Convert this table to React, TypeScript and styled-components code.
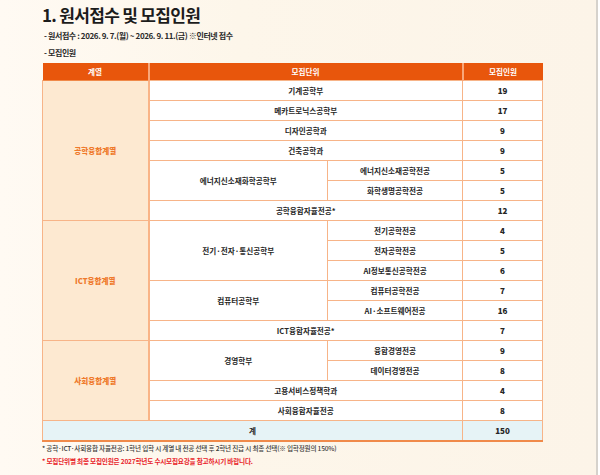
import React from "react";
import styled, { createGlobalStyle } from "styled-components";

const Global = createGlobalStyle`
  html, body { margin: 0; padding: 0; }
  body { font-family: "Noto Sans CJK KR", "Noto Sans", sans-serif; }
`;

const Page = styled.div`
  width: 598px;
  height: 475px;
  box-sizing: border-box;
  padding: 5px 0 0 42px;
  border-right: 2px solid #d6d2cc;
  background: linear-gradient(to right, #fffaf3 0%, #fdf6ea 40%, #fcf4e8 100%);
  color: #222;
  overflow: hidden;
`;

const Title = styled.h1`
  margin: 0;
  font-size: 17px;
  line-height: 20px;
  font-weight: 700;
  letter-spacing: -0.7px;
  color: #1c1c1c;
`;

const Sub = styled.div<{ $top: number }>`
  margin-top: ${(p) => p.$top}px;
  padding-left: 2px;
  font-size: 8px;
  line-height: 14px;
  font-weight: 700;
  letter-spacing: -0.4px;
  color: #2a2a2a;
`;

const Table = styled.table`
  margin-top: 3px;
  width: 500px;
  border-collapse: collapse;
  table-layout: fixed;
  font-size: 7.6px;
  font-weight: 700;
  color: #2b2b2b;
  border-bottom: 2px solid #f08a4a;
`;

const Th = styled.th`
  height: 17px;
  padding: 0;
  background: #e8560c;
  color: #fff;
  font-weight: 700;
  font-size: 7.6px;
  border-left: 2px solid #f9a77a;
  &:first-child { border-left: none; }
`;

const Td = styled.td<{ $kind?: "group" | "num" | "total" | "sub" }>`
  height: 19px;
  padding: 0;
  text-align: center;
  background: ${(p) =>
    p.$kind === "group" ? "#fde9d1" : p.$kind === "total" ? "#e6f3f6" : "#fff"};
  color: ${(p) => (p.$kind === "group" ? "#ef7a2c" : "#262626")};
  border: 1px solid #f7b488;
  border-left: ${(p) =>
    p.$kind === "num" || p.$kind === "sub" ? "1px solid #f08a4a" : "1px solid #f7b488"};
  font-weight: ${(p) => (p.$kind === "num" ? 800 : 700)};
  font-size: ${(p) => (p.$kind === "num" ? "8px" : "7.6px")};
`;

const GroupTd = styled(Td)`
  border-right: 2px solid #f9b487;
  border-top: 1px solid #f08a4a;
  font-weight: 800;
`;

const TotalNum = styled(Td)`
  border-left: 1px solid #f08a4a;
  font-weight: 800;
  font-size: 8px;
`;

const Notes = styled.div`
  margin-top: 0px;
  font-size: 6.6px;
  line-height: 13px;
  letter-spacing: -0.2px;
`;

const Note = styled.div<{ $red?: boolean }>`
  color: ${(p) => (p.$red ? "#e8242a" : "#3a3a3a")};
  font-weight: ${(p) => (p.$red ? 700 : 500)};
`;

type Row =
  | { group?: { name: string; span: number }; unit: string; num: number }
  | { group?: { name: string; span: number }; unitSpan?: { name: string; span: number }; sub: string; num: number };

const rows: Row[] = [
  { group: { name: "공학융합계열", span: 7 }, unit: "기계공학부", num: 19 },
  { unit: "메카트로닉스공학부", num: 17 },
  { unit: "디자인공학과", num: 9 },
  { unit: "건축공학과", num: 9 },
  { unitSpan: { name: "에너지신소재화학공학부", span: 2 }, sub: "에너지신소재공학전공", num: 5 },
  { sub: "화학생명공학전공", num: 5 },
  { unit: "공학융합자율전공*", num: 12 },
  { group: { name: "ICT융합계열", span: 6 }, unitSpan: { name: "전기·전자·통신공학부", span: 3 }, sub: "전기공학전공", num: 4 },
  { sub: "전자공학전공", num: 5 },
  { sub: "AI정보통신공학전공", num: 6 },
  { unitSpan: { name: "컴퓨터공학부", span: 2 }, sub: "컴퓨터공학전공", num: 7 },
  { sub: "AI·소프트웨어전공", num: 16 },
  { unit: "ICT융합자율전공*", num: 7 },
  { group: { name: "사회융합계열", span: 4 }, unitSpan: { name: "경영학부", span: 2 }, sub: "융합경영전공", num: 9 },
  { sub: "데이터경영전공", num: 8 },
  { unit: "고용서비스정책학과", num: 4 },
  { unit: "사회융합자율전공", num: 8 },
];

export default function App() {
  return (
    <>
      <Global />
      <Page>
        <Title>1. 원서접수 및 모집인원</Title>
        <Sub $top={4}>- 원서접수 : 2026. 9. 7.(월) ~ 2026. 9. 11.(금) ※인터넷 접수</Sub>
        <Sub $top={3}>- 모집인원</Sub>
        <Table>
          <colgroup>
            <col style={{ width: 106 }} />
            <col style={{ width: 179 }} />
            <col style={{ width: 135 }} />
            <col style={{ width: 80 }} />
          </colgroup>
          <thead>
            <tr>
              <Th>계열</Th>
              <Th colSpan={2}>모집단위</Th>
              <Th>모집인원</Th>
            </tr>
          </thead>
          <tbody>
            {rows.map((r, i) => (
              <tr key={i}>
                {r.group && (
                  <GroupTd $kind="group" rowSpan={r.group.span}>
                    {r.group.name}
                  </GroupTd>
                )}
                {"unit" in r ? (
                  <Td colSpan={2}>{r.unit}</Td>
                ) : (
                  <>
                    {r.unitSpan && <Td rowSpan={r.unitSpan.span}>{r.unitSpan.name}</Td>}
                    <Td $kind="sub">{r.sub}</Td>
                  </>
                )}
                <Td $kind="num">{r.num}</Td>
              </tr>
            ))}
            <tr>
              <Td $kind="total" colSpan={3}>계</Td>
              <TotalNum $kind="total">150</TotalNum>
            </tr>
          </tbody>
        </Table>
        <Notes>
          <Note>* 공학·ICT·사회융합 자율전공: 1학년 입학 시 계열 내 전공 선택 후 2학년 진급 시 최종 선택(※ 입학정원의 150%)</Note>
          <Note $red>* 모집단위별 최종 모집인원은 2027학년도 수시모집요강을 참고하시기 바랍니다.</Note>
        </Notes>
      </Page>
    </>
  );
}
